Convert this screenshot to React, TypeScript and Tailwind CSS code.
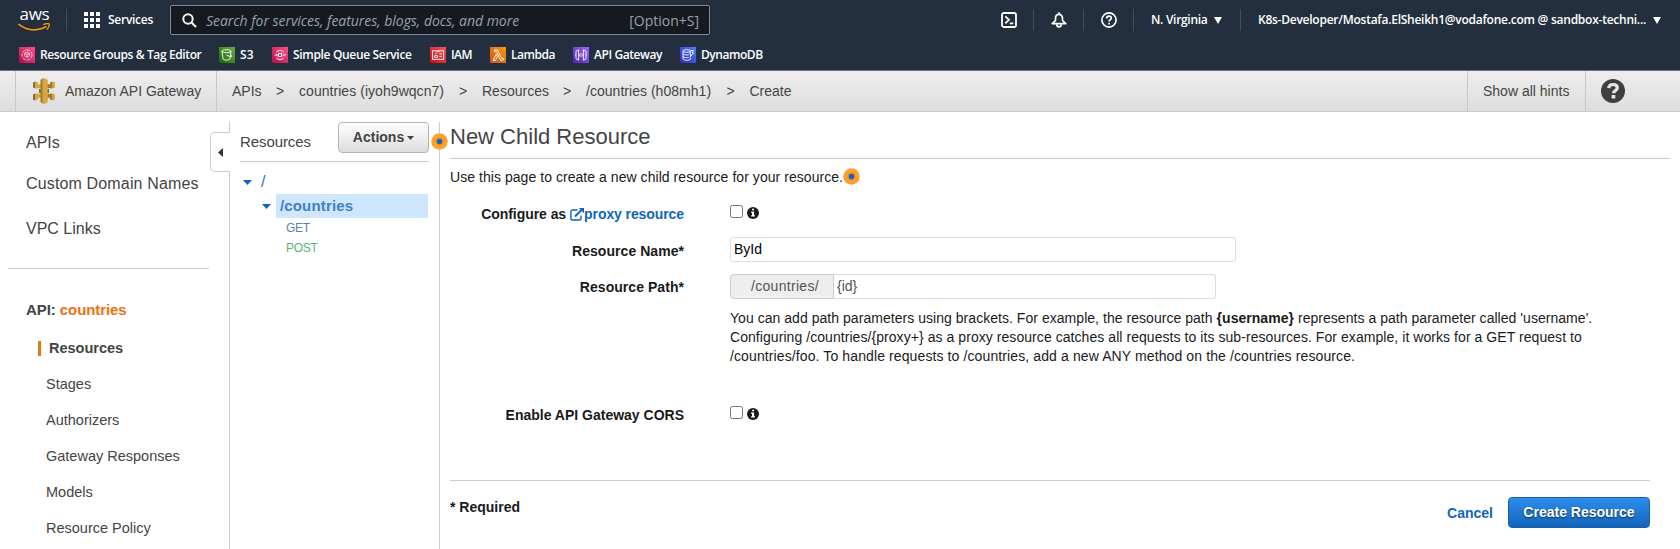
import type { ReactNode } from 'react';

const EMBER = "font-['Open_Sans','Noto_Sans',sans-serif]";

function Divider() {
  return <div className="h-[22px] w-px shrink-0 bg-[#414d5c]" />;
}

function AwsLogo() {
  return (
    <div className="flex h-[22px] w-[33px] shrink-0 flex-col items-center">
      <span className="-mt-[4px] block h-[17px] font-['Open_Sans',sans-serif] text-[17px] leading-[17px] font-medium tracking-[-0.3px] text-white">aws</span>
      <svg width="33" height="9" viewBox="0 0 33 9" fill="none" className="mt-px shrink-0">
        <path d="M.8 1.4C4.900 4.600 10.300 6.900 16.200 6.900c4.300 0 8.400-1.200 11.700-3.200" stroke="#ff9900" strokeWidth="1.500" strokeLinecap="round" />
        <path d="M25.800 1.500c2-.9 4.300-1.100 5.300-.7.400 1.500-.4 3.700-1.800 5.200" stroke="#ff9900" strokeWidth="1.300" strokeLinecap="round" strokeLinejoin="round" />
      </svg>
    </div>
  );
}

function GridIcon() {
  return (
    <div className="grid h-4 w-4 grid-cols-3 gap-[2px]">
      {Array.from({ length: 9 }, (_, i) => (
        <span key={i} className="bg-white" />
      ))}
    </div>
  );
}

function Caret({ className }: { className: string }) {
  return (
    <svg width="8" height="7" viewBox="0 0 8 7" className={className}>
      <path d="M0 0h8L4 7z" fill="currentColor" />
    </svg>
  );
}

type Service = { label: string; text: string; bg: string; icon: ReactNode };

const services: Service[] = [
  {
    label: 'Resource Groups & Tag Editor',
    text: 'w-[179px] tracking-[-0.38px]',
    bg: 'from-[#b0084d] to-[#ff4f8b]',
    icon: (
      <g opacity="0.75">
        <circle cx="8" cy="8" r="5" strokeDasharray="3.500 1" />
        <path d="M8 5l2.300 1.300v2.700L8 10.300 5.700 9V6.300zM5.700 6.300L8 7.600l2.300-1.300M8 7.600v2.700" />
        <path d="M4 12.500h.1M12 12.500h.1M8 2.500v.6" />
      </g>
    ),
  },
  {
    label: 'S3',
    text: 'w-[32px] tracking-[0.2px]',
    bg: 'from-[#1b660f] to-[#6cae3e]',
    icon: (
      <>
        <path d="M3 4.200c0-.9 2-1.500 4.500-1.500s4.500.6 4.500 1.500-2 1.400-4.500 1.400S3 5.100 3 4.200z" />
        <path d="M3 4.200l1 7.600c.2 1.700 6.800 1.700 7 0L12 4.200" />
        <path d="M7.500 8.200c2 .9 4.900 1.800 5.400 1.200.3-.5-.6-1.100-1.400-1.500" />
      </>
    ),
  },
  {
    label: 'Simple Queue Service',
    text: 'w-[137px] tracking-[-0.33px]',
    bg: 'from-[#b0084d] to-[#ff4f8b]',
    icon: (
      <>
        <path d="M4.300 5.500a4.300 4.300 0 017.400 0M4.300 10.500a4.300 4.300 0 007.400 0" />
        <path d="M2.500 8h3M10.500 8h3" />
        <rect x="6.400" y="6.400" width="3.200" height="3.200" />
        <path d="M4.800 7.200l.8.800-.8.800M12.700 7.200l.8.800-.8.800" />
      </>
    ),
  },
  {
    label: 'IAM',
    text: 'w-[39px] tracking-[-0.55px]',
    bg: 'from-[#bd0816] to-[#ff5252]',
    icon: (
      <>
        <rect x="2.500" y="3.800" width="11" height="8.500" />
        <path d="M4.300 10.300V8.800c0-.5 3.200-.5 3.200 0v1.500zM5.900 5.600v1.500M9.300 6.800h2.500M9.300 9.300h2.500M6.800 3.800v.8h2.400v-.8" />
      </>
    ),
  },
  {
    label: 'Lambda',
    text: 'w-[62px] tracking-[-0.47px]',
    bg: 'from-[#c8511b] to-[#ff9900]',
    icon: <path d="M4.500 2.800h3L11.700 11.500l1.300-.5.700 1.700-2.900 1L7.200 6.200 6.300 4.500H4.500zM6.200 7.200L2.900 13.500h2.400L7.400 9.600z" />,
  },
  {
    label: 'API Gateway',
    text: 'w-[86px] tracking-[-0.42px]',
    bg: 'from-[#4d27a8] to-[#a166ff]',
    icon: (
      <>
        <path d="M5.600 2.800v10.400L3 11.800V4.200zM10.400 2.800v10.400l2.600-1.400V4.200z" />
        <path d="M7.300 6.400L6.700 8l.6 1.600M8.700 6.400l.6 1.600-.6 1.600M3 8H2M14 8h-1" />
      </>
    ),
  },
  {
    label: 'DynamoDB',
    text: 'w-[64px] tracking-[-0.45px]',
    bg: 'from-[#2e27ad] to-[#527fff]',
    icon: (
      <>
        <path d="M3 4c0-.8 1.700-1.300 3.700-1.300s3.700.5 3.700 1.300-1.700 1.300-3.700 1.300S3 4.800 3 4zv8c0 .8 1.700 1.300 3.700 1.300s3.700-.5 3.700-1.300v-1.500" />
        <path d="M3 6.700c0 .8 1.700 1.300 3.700 1.300.7 0 1.500 0 2-.2M3 9.400c0 .8 1.700 1.300 3.700 1.300.7 0 1.500 0 2-.2" />
        <path d="M11 3.500h2.300l-1 2.300h1.200l-3.200 4 .6-2.800H9.800z" />
      </>
    ),
  },
];

function TopNav() {
  return (
    <header className={`h-[71px] shrink-0 border-b border-[#6f6e79] bg-[#232f3e] text-white ${EMBER}`}>
      <div className="flex h-10 items-center">
        <div className="w-[66px] shrink-0 pl-[18px]">
          <AwsLogo />
        </div>
        <Divider />
        <div className="flex w-[103px] shrink-0 items-center gap-2 pl-[17px]">
          <GridIcon />
          <span className="text-[12px] font-semibold tracking-[-0.27px]">Services</span>
        </div>
        <div className="flex h-[30px] w-[540px] shrink-0 items-center justify-between rounded-[2px] border border-[#7d8998] bg-[#16191f] pr-[10px] pl-[11px]">
          <div className="flex items-center gap-[9px]">
            <svg width="15" height="15" viewBox="0 0 15 15" fill="none" stroke="#f2f3f3" strokeWidth="2">
              <circle cx="6" cy="6" r="4.700" />
              <path d="M9.500 9.500l4.500 4.500" strokeWidth="2.200" />
            </svg>
            <span className="text-[14px] tracking-[-0.040px] whitespace-nowrap text-[#95a5a6] italic">
              Search for services, features, blogs, docs, and more
            </span>
          </div>
          <span className="text-[14px] text-[#95a5a6]">[Option+S]</span>
        </div>
        <div className="ml-auto flex shrink-0 items-center">
          <svg width="16" height="16" viewBox="0 0 16 16" fill="none" stroke="#fff" strokeWidth="1.800" className="mr-4">
            <rect x="1" y="1" width="14" height="14" rx="1.800" />
            <path d="M4.300 4.300L8 7.800l-3.700 3.500M8.800 11.300h3.500" />
          </svg>
          <Divider />
          <svg width="16" height="16" viewBox="0 0 16 16" fill="none" stroke="#fff" strokeWidth="1.700" strokeLinejoin="round" className="mx-[16.500px]">
            <path d="M1.300 11.700h13.400L11.500 8.500V6.300C11.500 4 10 2.300 8 2.300S4.500 4 4.500 6.300v2.200z" />
            <path d="M8 .3v1.500M5.700 12.200c0 1.600.9 2.600 2.300 2.600s2.300-1 2.300-2.600" />
          </svg>
          <Divider />
          <svg width="16" height="16" viewBox="0 0 16 16" fill="none" stroke="#fff" strokeWidth="1.700" className="mx-[16.500px]">
            <circle cx="8" cy="8" r="7.100" />
            <path d="M5.700 6.500c0-1.500 1-2.400 2.300-2.400s2.300.9 2.300 2.100c0 1.500-2.200 1.600-2.200 3.300M8.100 10.700v1.700" />
          </svg>
          <Divider />
          <span className="ml-[17px] w-[63px] text-[12px] font-semibold tracking-[-0.3px] whitespace-nowrap">N. Virginia</span>
          <Caret className="mr-[18px] text-white" />
          <Divider />
          <span className="ml-[17px] w-[395px] text-[12px] font-semibold tracking-[-0.25px] whitespace-nowrap">
            K8s-Developer/Mostafa.ElSheikh1@vodafone.com @ sandbox-techni...
          </span>
          <Caret className="mr-[19px] text-white" />
        </div>
      </div>
      <nav className="flex h-[30px] items-center pl-[19px]">
        {services.map((s) => (
          <div key={s.label} className="flex items-center gap-[5px]">
            <div className={`h-4 w-4 shrink-0 bg-linear-to-tr ${s.bg}`}>
              <svg width="16" height="16" viewBox="0 0 16 16" fill="none" stroke="#fff" strokeWidth="0.900">
                {s.icon}
              </svg>
            </div>
            <span className={`text-[12px] leading-4 font-semibold whitespace-nowrap ${s.text}`}>{s.label}</span>
          </div>
        ))}
      </nav>
    </header>
  );
}

function GatewayLogo() {
  return (
    <svg width="22" height="26" viewBox="0 0 22 26">
      <path d="M0 4.500l2.500-1v7L0 9.500zM0 16.500l2.500-1v7L0 21.500z" fill="#876929" />
      <path d="M2.500 3.500L5 4.500v1.800h3v3.700l-5.500.5zM2.500 15.500L8 16v3.700H5v1.800l-2.500 1z" fill="#d9a741" />
      <path d="M22 4.500l-2.500-1v7l2.500-1zM22 16.500l-2.500-1v7l2.500-1z" fill="#d9a741" />
      <path d="M19.500 3.500L17 4.500v1.800h-3v3.700l5.500.5zM19.500 15.500L14 16v3.700h3v1.800l2.500 1z" fill="#a07a2c" />
      <path d="M6 11h2.500v4H6zM13.500 11H16v4h-2.500z" fill="#876929" />
      <path d="M7.500 1.800L11 0v26l-3.500-1.800z" fill="#a07a2c" />
      <path d="M9.500.8L11 0l3.700 1.800v22.400L11 26l-1.500-.8z" fill="#d9a741" />
    </svg>
  );
}

function BreadcrumbBar() {
  return (
    <div className="flex h-[41px] shrink-0 items-stretch border-b border-[#ccc] bg-linear-to-b from-[#eeeeee] to-[#dddddd] text-[14px] whitespace-nowrap text-[#444]">
      <div className="ml-[15px] flex w-[202px] items-center border-x border-[#c8c8c8] pl-[17px]">
        <GatewayLogo />
        <span className="ml-[10px]">Amazon API Gateway</span>
      </div>
      <div className="flex items-center">
        <span className="ml-[15px] w-[44px]">APIs</span>
        <span className="w-[23px]">&gt;</span>
        <span className="w-[160px] tracking-[0.050px]">countries (iyoh9wqcn7)</span>
        <span className="w-[23px]">&gt;</span>
        <span className="w-[81px]">Resources</span>
        <span className="w-[23px]">&gt;</span>
        <span className="w-[140.500px] tracking-[0.030px]">/countries (h08mh1)</span>
        <span className="w-[23px]">&gt;</span>
        <span>Create</span>
      </div>
      <div className="ml-auto flex w-[119px] items-center border-x border-[#c8c8c8] pl-[15px]">Show all hints</div>
      <div className="flex w-[94px] items-center pl-[15px]">
        <svg width="24" height="24" viewBox="0 0 24 24">
          <circle cx="12" cy="12" r="12" fill="#3f3f3f" />
          <path d="M7.700 9.200C7.900 6.700 9.600 5.500 12.100 5.500c2.400 0 4.200 1.200 4.200 3.400 0 2.700-3.800 2.700-3.800 5.300" fill="none" stroke="#e6e6e6" strokeWidth="3.200" />
          <rect x="10.600" y="16" width="3.700" height="3.500" fill="#e6e6e6" />
        </svg>
      </div>
    </div>
  );
}

function Sidebar() {
  return (
    <aside className="flex w-[229px] shrink-0 text-[#444]">
      <div className="w-[210px]">
        <ul className="pl-[26px] text-[16px] leading-5 whitespace-nowrap">
          <li className="pt-[21px]">APIs</li>
          <li className="pt-[21px] tracking-[0.150px]">Custom Domain Names</li>
          <li className="pt-[25px]">VPC Links</li>
        </ul>
        <div className="mt-[29px] ml-[8px] h-px w-[201px] bg-[#ccc]" />
        <div className="mt-[31px] pl-[26px] text-[15px] leading-5 font-bold tracking-[-0.080px]">
          API: <span className="text-[#ec7211]">countries</span>
        </div>
        <ul className="mt-[21px] text-[14.5px] leading-[15px]">
          <li className="mb-[21px] ml-[38px] border-l-[3px] border-[#e47911] pl-[8px] font-bold">Resources</li>
          {['Stages', 'Authorizers', 'Gateway Responses', 'Models', 'Resource Policy'].map((item) => (
            <li key={item} className="mb-[21px] pl-[46px]">
              {item}
            </li>
          ))}
        </ul>
      </div>
      <button className="mt-[20px] -mr-px flex h-[40px] w-[20px] items-center justify-center rounded-l-[5px] border border-r-0 border-[#ccc]" aria-label="Collapse">
        <svg width="5" height="9" viewBox="0 0 5 9" className="-ml-px">
          <path d="M5 0v9L0 4.500z" fill="#333" />
        </svg>
      </button>
    </aside>
  );
}

function TreeCaret() {
  return (
    <svg width="9" height="5" viewBox="0 0 9 5" className="shrink-0">
      <path d="M0 0h9L4.500 5z" fill="#1166bb" />
    </svg>
  );
}

function ResourceTree() {
  return (
    <section className="flex w-[210px] shrink-0 pt-[10px]">
      <div className="flex w-px flex-col">
        <div className="h-[11px] bg-[#ccc]" />
        <div className="h-[38px]" />
        <div className="flex-1 bg-[#ccc]" />
      </div>
      <div className="ml-[10px] w-[189px]">
        <div className="flex h-[40px] justify-between border-b border-[#ccc]">
          <h2 className="mt-[10px] text-[15px] leading-5 tracking-[-0.080px] text-[#444]">Resources</h2>
          <button className="flex h-[31px] w-[91px] items-center justify-center gap-[3px] rounded-[4px] border border-[#b4b4b4] bg-linear-to-b from-white to-[#dddddd] text-[14px] font-bold text-[#444]">
            <span>Actions</span>
            <svg width="7" height="4" viewBox="0 0 7 4">
              <path d="M0 0h7L3.500 4z" fill="#444" />
            </svg>
          </button>
        </div>
        <div className="mt-[9px] flex h-[22px] items-center gap-[9px] pl-[3px] text-[16px] text-[#2a72c0]">
          <TreeCaret />
          <span>/</span>
        </div>
        <div className="mt-px flex h-[24px] items-center gap-[5px] pl-[22px]">
          <TreeCaret />
          <div className="flex h-[24px] w-[152px] items-center bg-[#cfe6ff] pl-[4px] text-[15px] font-bold tracking-[0.150px] text-[#4080c4]">/countries</div>
        </div>
        <div className="pl-[46px] text-[12px] leading-5 tracking-[-0.25px]">
          <div className="text-[#5585b5]">GET</div>
          <div className="text-[#55b870]">POST</div>
        </div>
      </div>
    </section>
  );
}

function Hint({ className }: { className: string }) {
  return (
    <svg width="17" height="17" viewBox="0 0 17 17" className={className}>
      <circle cx="8.500" cy="8.500" r="8.300" fill="#ff9f2e" />
      <circle cx="8.500" cy="8.500" r="4.300" fill="#e8922f" />
      <circle cx="8.500" cy="8.500" r="2.700" fill="#1166bb" />
    </svg>
  );
}

function CheckWithInfo() {
  return (
    <div className="flex gap-[4px]">
      <span className="block h-[13px] w-[13px] rounded-[2.500px] border border-[#767676] bg-white" />
      <svg width="12" height="12" viewBox="0 0 12 12" className="mt-[1.500px]">
        <circle cx="6" cy="6" r="6" fill="#1a1a1a" />
        <path d="M5 1.700h2.100v1.600H5zM4.100 4.500h3v3.700h.9v1.200H4.100V8.200H5V5.700h-.9z" fill="#fff" />
      </svg>
    </div>
  );
}

function Row({ label, className, labelClass, children }: { label: ReactNode; className: string; labelClass: string; children: ReactNode }) {
  return (
    <div className={`flex items-start ${className}`}>
      <div className={`flex w-[234px] shrink-0 items-center justify-end leading-5 font-bold whitespace-nowrap ${labelClass}`}>{label}</div>
      <div className="ml-[46px]">{children}</div>
    </div>
  );
}

function CreateForm() {
  return (
    <main className="relative mt-[10px] flex-1 border-l border-[#ccc] pl-[10px] text-[14px] text-[#1a1a1a]">
      <Hint className="absolute top-[11px] -left-[9px]" />
      <div className="h-[37px] w-[1220px] border-b border-[#ccc]">
        <h1 className="text-[22px] leading-[29px] text-[#444]">New Child Resource</h1>
      </div>
      <div className="mt-[8px] flex h-5 items-center">
        <span className="tracking-[0.050px]">Use this page to create a new child resource for your resource.</span>
        <Hint className="-mt-px" />
      </div>
      <Row
        className="mt-[18px] h-[32px]"
        labelClass="-mt-px"
        label={
          <>
            <span className="mr-[4px] tracking-[-0.060px]">Configure as</span>
            <svg width="14" height="13" viewBox="0 0 14 13" fill="none" stroke="#1166bb" strokeWidth="1.400">
              <path d="M7.500 2H2.700C1.600 2 .9 2.800.9 3.700v6.500c0 1 .8 1.800 1.800 1.800h6.500c1 0 1.800-.8 1.800-1.800V7.500" />
              <path d="M5 8.500l6.500-6.500" strokeWidth="2" />
              <path d="M8.800 0H14v5.200z" fill="#1166bb" stroke="none" />
            </svg>
            <a className="tracking-[-0.090px] text-[#1166bb]">proxy resource</a>
          </>
        }
      >
        <CheckWithInfo />
      </Row>
      <Row className="h-[37px]" labelClass="mt-[4px]" label={<span className="tracking-[0.050px]">Resource Name*</span>}>
        <div className="flex h-[25px] w-[506px] items-center rounded-[3px] border border-[#ddd] bg-white pl-[3px] text-black">ById</div>
      </Row>
      <Row className="h-[35px]" labelClass="mt-[3px]" label={<span className="tracking-[0.050px]">Resource Path*</span>}>
        <div className="flex h-[25px] w-[486px]">
          <div className="flex w-[104px] items-center rounded-l-[4px] border border-[#ccc] bg-[#eee] pl-[20px] tracking-[0.3px] text-[#555]">/countries/</div>
          <div className="flex flex-1 items-center rounded-r-[3px] border border-l-0 border-[#ddd] pl-[3px] text-[#555]">{'{id}'}</div>
        </div>
      </Row>
      <p className="ml-[280px] h-[97px] leading-[19px] tracking-[0.060px] whitespace-nowrap">
        <span className="tracking-[0.040px]">
          You can add path parameters using brackets. For example, the resource path <b>{'{username}'}</b> represents a path parameter called 'username'.
        </span>
        <br />
        Configuring /countries/{'{proxy+}'} as a proxy resource catches all requests to its sub-resources. For example, it works for a GET request to
        <br />
        <span className="tracking-[0.110px]">/countries/foo. To handle requests to /countries, add a new ANY method on the /countries resource.</span>
      </p>
      <Row className="h-[74px]" labelClass="-mt-px" label="Enable API Gateway CORS">
        <CheckWithInfo />
      </Row>
      <div className="flex w-[1200px] items-start border-t border-[#ccc]">
        <b className="mt-[16px] leading-5">* Required</b>
        <a className="mt-[22px] ml-auto leading-5 font-bold text-[#1166bb]">Cancel</a>
        <button className="mt-[16px] ml-[15px] h-[31px] w-[142px] rounded-[4px] border border-[#1a5fa8] bg-linear-to-b from-[#2e8ded] to-[#1166bb] font-bold text-white [text-shadow:0_1px_2px_rgba(0,0,0,0.6)]">
          Create Resource
        </button>
      </div>
    </main>
  );
}

export default function App() {
  return (
    <div className="flex h-[549px] w-[1680px] flex-col overflow-hidden bg-white font-['Liberation_Sans',Arial,sans-serif]">
      <TopNav />
      <BreadcrumbBar />
      <div className="flex min-h-0 flex-1">
        <Sidebar />
        <ResourceTree />
        <CreateForm />
      </div>
    </div>
  );
}
